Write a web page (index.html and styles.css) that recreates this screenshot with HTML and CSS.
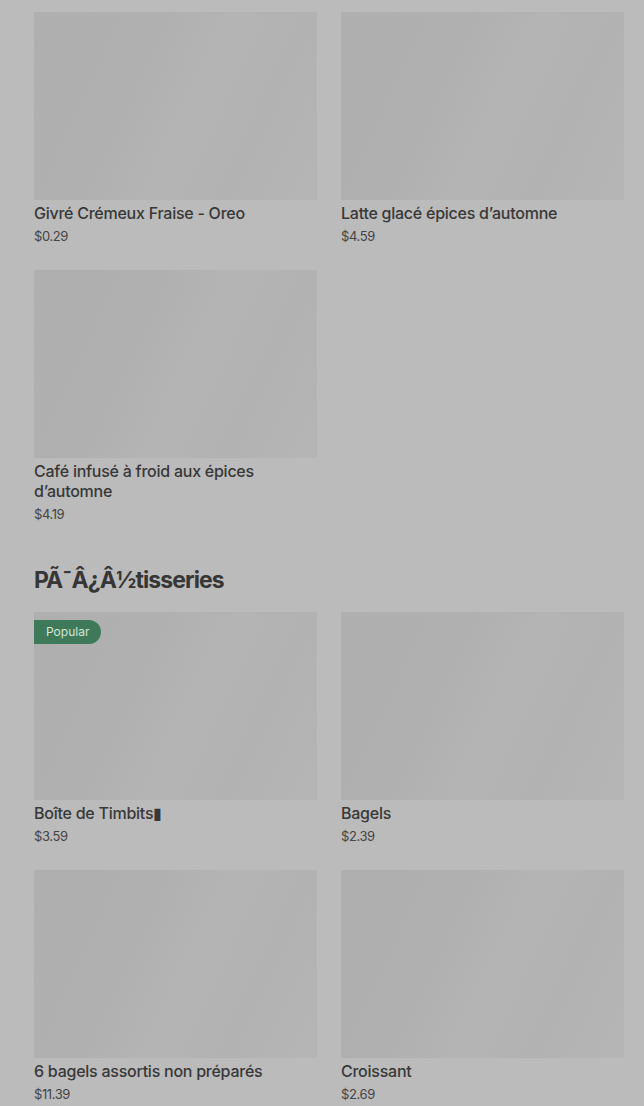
FILE: index.html
```html
<!DOCTYPE html>
<html>
<head>
  <title>Menu</title>
  <link rel="stylesheet" href="styles.css">
</head>
<body>
  <div class="menu">
    <div class="product-grid">
      <div class="product">
        <div class="product-image"></div>
        <div class="product-name">Givré Crémeux Fraise - Oreo</div>
        <div class="product-price">$0.29</div>
      </div>
      <div class="product">
        <div class="product-image"></div>
        <div class="product-name">Latte glacé épices d’automne</div>
        <div class="product-price">$4.59</div>
      </div>
      <div class="product">
        <div class="product-image"></div>
        <div class="product-name">Café infusé à froid aux épices d’automne</div>
        <div class="product-price">$4.19</div>
      </div>
    </div>

    <h2 class="section-title">PÃ¯Â¿Â½tisseries</h2>

    <div class="product-grid">
      <div class="product">
        <div class="product-image">
          <span class="badge">Popular</span>
        </div>
        <div class="product-name">Boîte de Timbits▮</div>
        <div class="product-price">$3.59</div>
      </div>
      <div class="product">
        <div class="product-image"></div>
        <div class="product-name">Bagels</div>
        <div class="product-price">$2.39</div>
      </div>
      <div class="product">
        <div class="product-image"></div>
        <div class="product-name">6 bagels assortis non préparés</div>
        <div class="product-price">$11.39</div>
      </div>
      <div class="product">
        <div class="product-image"></div>
        <div class="product-name">Croissant</div>
        <div class="product-price">$2.69</div>
      </div>
    </div>
  </div>
</body>
</html>
```

FILE: styles.css
```css
body {
  margin: 0;
  padding: 0;
  background-color: #bbbbbb;
  font-family: Inter, 'Noto Sans', sans-serif;
  color: #363636;
}

.menu {
  padding: 12px 20px 0 34px;
}

.product-grid {
  display: grid;
  grid-template-columns: 1fr 1fr;
  column-gap: 24px;
  row-gap: 24px;
}

.product-image {
  position: relative;
  height: 188px;
  margin-bottom: 3px;
  background: linear-gradient(115deg, #afafaf 0%, #b0b0b0 35%, #b4b4b4 55%, #b2b2b2 75%, #b5b5b5 100%);
}

.badge {
  position: absolute;
  top: 8px;
  left: 0;
  padding: 0 12px;
  height: 24px;
  line-height: 24px;
  font-size: 12px;
  color: #d4e4d9;
  background-color: #3e7a59;
  border-radius: 0 12px 12px 0;
}

.product-name {
  font-size: 16px;
  font-weight: 500;
  line-height: 20px;
  letter-spacing: -0.25px;
  color: #383838;
  margin-bottom: 3px;
}

.product-price {
  font-size: 13px;
  line-height: 20px;
  letter-spacing: -0.4px;
  color: #444444;
}

.section-title {
  margin: 40px 0 16px;
  font-size: 23px;
  font-weight: 700;
  line-height: 32px;
  letter-spacing: -0.9px;
  color: #363636;
}
```
